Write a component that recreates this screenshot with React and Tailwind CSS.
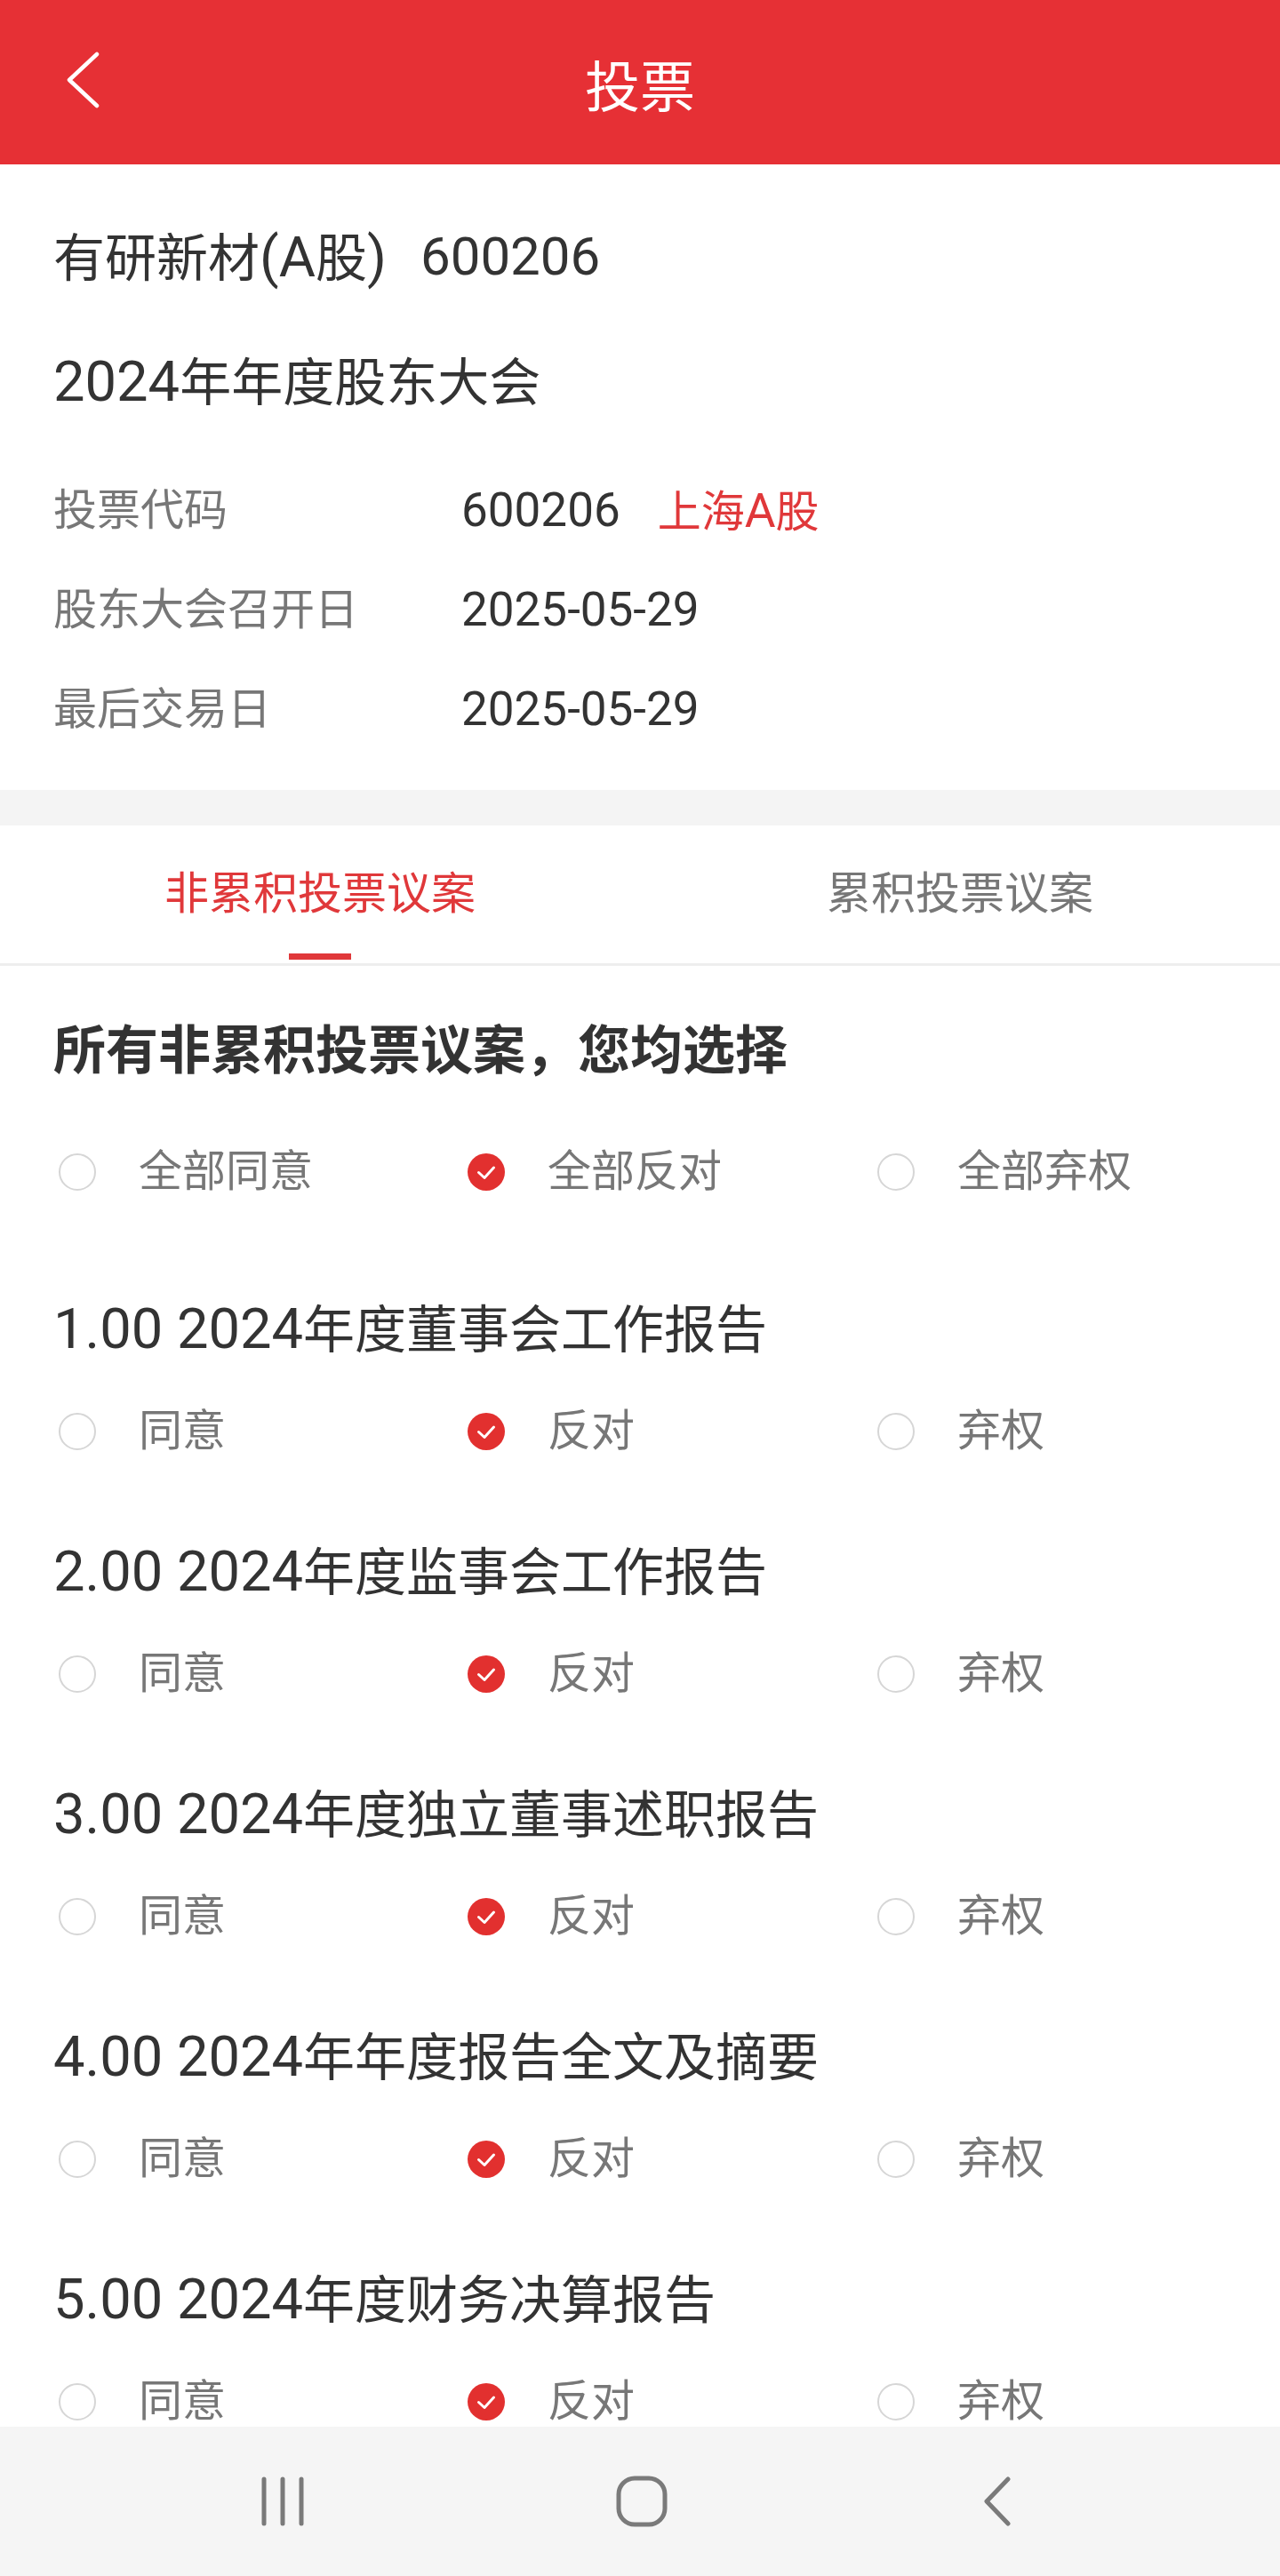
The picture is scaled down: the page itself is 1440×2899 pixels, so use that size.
import { useState } from 'react';

const proposals = [
  '1.00 2024年度董事会工作报告',
  '2.00 2024年度监事会工作报告',
  '3.00 2024年度独立董事述职报告',
  '4.00 2024年年度报告全文及摘要',
  '5.00 2024年度财务决算报告',
];

// latin runs are drawn a bit larger, like the phone's system font
function Mixed({ text }) {
  return text.split(/([\x00-\x7F]+)/).filter(Boolean).map((s, i) =>
    /^[\x00-\x7F]+$/.test(s) ? <span key={i} className="text-[1.09em]">{s}</span> : <span key={i}>{s}</span>
  );
}

function Radio({ checked, label, onClick }) {
  return (
    <button onClick={onClick} className="flex items-center h-full text-left">
      <span className="w-[42px] h-[42px] ml-[6px] flex items-center justify-center">
        {checked ? (
          <svg width="42" height="42" viewBox="0 0 42 42">
            <circle cx="21" cy="21" r="21" fill="#e2302f" />
            <polyline points="12.5,21.5 19,27.5 29.5,16" fill="none" stroke="#fff" strokeWidth="3" strokeLinecap="round" strokeLinejoin="round" />
          </svg>
        ) : (
          <span className="block w-[42px] h-[42px] rounded-full border-2 border-[#d6d6d6]" />
        )}
      </span>
      <span className="ml-[48px] text-[49px] text-[#777]">{label}</span>
    </button>
  );
}

function ChoiceRow({ value, onChange, prefix = '' }) {
  const opts = ['同意', '反对', '弃权'];
  return (
    <div className="grid grid-cols-[460px_461px_460px] h-[116px]">
      {opts.map((o) => (
        <Radio key={o} label={prefix + o} checked={value === o} onClick={() => onChange(o)} />
      ))}
    </div>
  );
}

export default function App() {
  const [tab, setTab] = useState(0);
  const [all, setAll] = useState('反对');
  const [votes, setVotes] = useState(proposals.map(() => '反对'));

  const pickAll = (v) => {
    setAll(v);
    setVotes(proposals.map(() => v));
  };

  return (
    <div className="w-[1440px] h-[2899px] flex flex-col bg-white font-[Roboto,'Noto_Sans_CJK_SC',sans-serif] overflow-hidden">
      <div className="flex-1 overflow-hidden">
        {/* header */}
        <div className="relative h-[185px] bg-[#e63035] flex items-center justify-center pt-[14px]">
          <button className="absolute left-[74px] top-[58px]">
            <svg width="38" height="64" viewBox="0 0 38 64">
              <polyline points="35,3 4,32 35,61" fill="none" stroke="#fff" strokeWidth="4.5" strokeLinecap="round" strokeLinejoin="round" />
            </svg>
          </button>
          <span className="text-[62px] text-white leading-none">投票</span>
        </div>

        {/* stock info */}
        <div className="px-[60px] pt-[34px] pb-[34px]">
          <div className="h-[140px] flex items-center text-[58px] text-[#333]">
            <span><Mixed text="有研新材(A股)" /></span>
            <span className="ml-[38px] text-[60px]">600206</span>
          </div>
          <div className="h-[140px] flex items-center text-[58px] text-[#333]">
            <span><Mixed text="2024年年度股东大会" /></span>
          </div>
          <div className="mt-[20px] text-[49px]">
            <div className="h-[112px] flex items-center">
              <span className="w-[459px] text-[#777]">投票代码</span>
              <span className="text-[#333] text-[53px]">600206</span>
              <span className="ml-[42px] text-[#e0383a]"><Mixed text="上海A股" /></span>
            </div>
            <div className="h-[112px] flex items-center">
              <span className="w-[459px] text-[#777]">股东大会召开日</span>
              <span className="text-[#333] text-[53px]">2025-05-29</span>
            </div>
            <div className="h-[112px] flex items-center">
              <span className="w-[459px] text-[#777]">最后交易日</span>
              <span className="text-[#333] text-[53px]">2025-05-29</span>
            </div>
          </div>
        </div>

        <div className="h-[40px] bg-[#f4f4f4]" />

        {/* tabs */}
        <div className="flex h-[158px] border-b-[3px] border-[#eeeeee]">
          {['非累积投票议案', '累积投票议案'].map((t, i) => (
            <button
              key={t}
              onClick={() => setTab(i)}
              className={`relative flex-1 flex items-center justify-center text-[50px] ${tab === i ? 'text-[#e0383a]' : 'text-[#777]'}`}
            >
              {t}
              {tab === i && <span className="absolute bottom-[4px] left-1/2 -translate-x-1/2 w-[70px] h-[7px] bg-[#e0383a]" />}
            </button>
          ))}
        </div>

        {/* proposals */}
        <div className="px-[60px] pt-[38px]">
          <div className="h-[116px] flex items-center text-[59px] font-bold text-[#333]">所有非累积投票议案，您均选择</div>
          <div className="mt-[20px]">
            <ChoiceRow value={all} onChange={pickAll} prefix="全部" />
          </div>
          <div className="mt-[60px]">
            {proposals.map((p, i) => (
              <div key={p} className="mb-[41px]">
                <div className="h-[116px] flex items-center text-[58px] text-[#333]">
                  <span><Mixed text={p} /></span>
                </div>
                <ChoiceRow
                  value={votes[i]}
                  onChange={(v) => setVotes(votes.map((x, j) => (j === i ? v : x)))}
                />
              </div>
            ))}
          </div>
        </div>
      </div>

      {/* system nav bar */}
      <div className="h-[168px] shrink-0 bg-[#f5f5f5] flex justify-center items-center">
        <div className="w-[402px] flex justify-center">
          <svg width="52" height="56" viewBox="0 0 52 56">
            <line x1="5" y1="3" x2="5" y2="53" stroke="#7a7a7a" strokeWidth="5" strokeLinecap="round" />
            <line x1="26" y1="3" x2="26" y2="53" stroke="#7a7a7a" strokeWidth="5" strokeLinecap="round" />
            <line x1="47" y1="3" x2="47" y2="53" stroke="#7a7a7a" strokeWidth="5" strokeLinecap="round" />
          </svg>
        </div>
        <div className="w-[402px] flex justify-center">
          <svg width="58" height="58" viewBox="0 0 58 58" className="ml-[4px]">
            <rect x="3" y="3" width="52" height="52" rx="18" fill="none" stroke="#7a7a7a" strokeWidth="5" />
          </svg>
        </div>
        <div className="w-[402px] flex justify-center">
          <svg width="34" height="56" viewBox="0 0 34 56">
            <polyline points="29,3 5,28 29,53" fill="none" stroke="#7a7a7a" strokeWidth="5" strokeLinecap="round" strokeLinejoin="round" />
          </svg>
        </div>
      </div>
    </div>
  );
}
